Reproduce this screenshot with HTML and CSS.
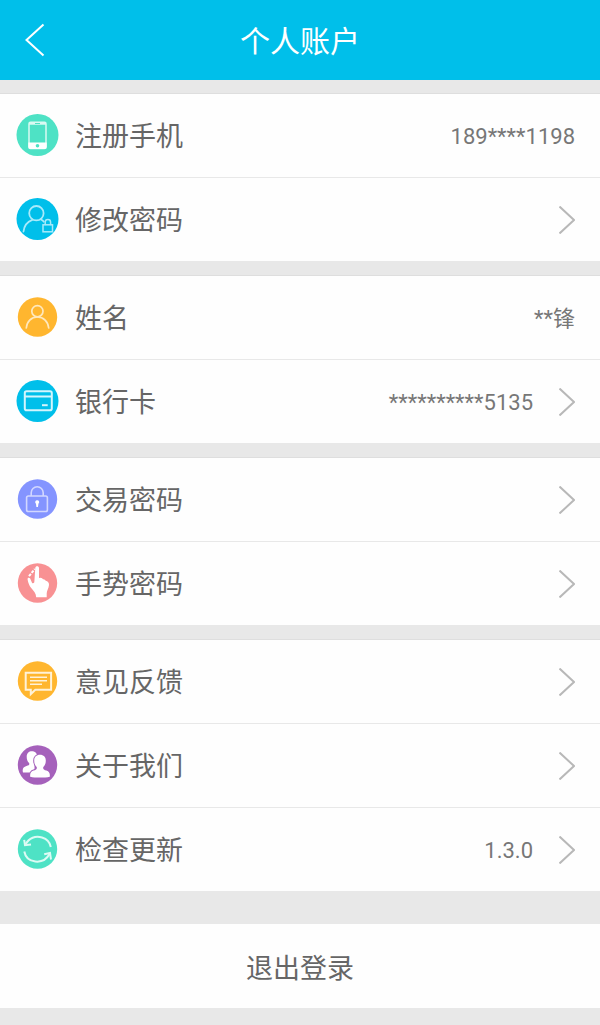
FILE: index.html
```html
<!DOCTYPE html>
<html lang="zh-CN">
<head>
    <meta charset="UTF-8">
    <meta name="viewport" content="width=device-width, initial-scale=1.0">
    <title>个人账户</title>
    <link rel="stylesheet" href="styles.css">
</head>
<body>
    <svg class="sprite" aria-hidden="true">
        <symbol id="arrow" viewBox="0 0 16 28">
            <path d="M0.500 0.500 15 14 0.500 27.500"/>
        </symbol>
    </svg>

    <header class="header">
        <a href="#" class="back" aria-label="返回">
            <svg width="20" height="34" viewBox="0 0 20 34"><path d="M18.500 1.500 1.500 17l17 15.500"/></svg>
        </a>
        <h1>个人账户</h1>
    </header>

    <main>
        <section class="group">
            <div class="row">
                <svg class="icon" viewBox="0 0 43 43">
                    <circle cx="21.500" cy="21" r="21" fill="#4ee2c5"/>
                    <rect x="13" y="8.200" width="17" height="26.300" rx="1.500" fill="none" stroke="#d9faf2" stroke-width="1.500"/>
                    <path d="M12.300 28.500h18.400V33a2 2 0 0 1-2 2H14.300a2 2 0 0 1-2-2z" fill="#fff"/>
                    <path d="M13 9.500h17" stroke="#d9faf2" stroke-width="2.500"/>
                    <path d="M19 9.500h5" stroke="#4ee2c5" stroke-width="1"/>
                    <circle cx="21.500" cy="31.700" r="1.800" fill="#4ee2c5"/>
                </svg>
                <span class="label">注册手机</span>
                <span class="value">189****1198</span>
            </div>
            <a href="#" class="row">
                <svg class="icon" viewBox="0 0 43 43">
                    <circle cx="21.500" cy="21" r="21" fill="#00bfea"/>
                    <g fill="none" stroke="#a8eafa" stroke-width="1.800" stroke-linecap="round">
                        <circle cx="20.400" cy="15.200" r="7.200"/>
                        <path d="M7.500 33.500c.6-5.500 3.800-9.800 8.800-11.700M25 21.500c1.200.6 2 1.300 2.800 2.200"/>
                        <rect x="27" y="26.800" width="9.500" height="7" stroke-width="1.500"/>
                        <path d="M29.200 26.500v-2.300a2.700 2.700 0 0 1 5.400 0v2.300" stroke-width="1.500"/>
                    </g>
                </svg>
                <span class="label">修改密码</span>
                <svg class="arrow"><use href="#arrow"/></svg>
            </a>
        </section>

        <section class="group">
            <div class="row">
                <svg class="icon" viewBox="0 0 43 43">
                    <circle cx="21.500" cy="21" r="19.700" fill="#ffb62f"/>
                    <g fill="none" stroke="#ffe8bd" stroke-width="1.700" stroke-linecap="round">
                        <circle cx="21.400" cy="15.200" r="5.600"/>
                        <path d="M10.300 32c.5-6.500 5-11 11.100-11s10.700 4.500 11.300 11"/>
                    </g>
                </svg>
                <span class="label">姓名</span>
                <span class="value">**锋</span>
            </div>
            <a href="#" class="row">
                <svg class="icon" viewBox="0 0 43 43">
                    <circle cx="21.500" cy="21" r="21" fill="#00bfea"/>
                    <g fill="none" stroke="#d2f5fd" stroke-width="2">
                        <rect x="8.800" y="11.200" width="27" height="19" rx="1.800"/>
                        <path d="M9 16.500h27"/>
                        <path d="M26 25.200h5.700"/>
                    </g>
                </svg>
                <span class="label">银行卡</span>
                <span class="value">**********5135</span>
                <svg class="arrow"><use href="#arrow"/></svg>
            </a>
        </section>

        <section class="group">
            <a href="#" class="row">
                <svg class="icon" viewBox="0 0 43 43">
                    <circle cx="21.500" cy="21" r="19.700" fill="#8494ff"/>
                    <g fill="none" stroke="#d2d7ff" stroke-width="1.600">
                        <rect x="10.600" y="18" width="20.800" height="15.500" rx="1.800"/>
                        <path d="M15.200 18v-3.200a6 6 0 0 1 12 0V18"/>
                    </g>
                    <path d="M21.200 22.200a2 2 0 0 1 1.200 3.600l-.4 3.200h-1.600l-.4-3.200a2 2 0 0 1 1.200-3.600z" fill="#fff"/>
                </svg>
                <span class="label">交易密码</span>
                <svg class="arrow"><use href="#arrow"/></svg>
            </a>
            <a href="#" class="row">
                <svg class="icon" viewBox="0 0 43 43">
                    <circle cx="21.500" cy="21" r="19.700" fill="#f89193"/>
                    <path d="M19.300 6c0-2.300 3.700-2.300 3.700 0v10l1.500-.3c1.300 0 2 .8 2.500 1.500 1.400-.2 2.300.6 2.700 1.500 2.200.2 3.500 2.100 3.300 4.300-.3 3.500-2.300 5.700-2.300 8.500v3.800H20.200c-.2-4-2.400-6.300-5-9.300-2-2.300-3-5.200-3.600-8.500-.4-2 1.700-2.400 2.600-.9l1.900 4.300c.8.700 1.800.1 2.200-.7z" fill="#fff"/>
                    <path d="M13 14.200 18.800 7" stroke="#fff" stroke-width="2" stroke-dasharray="3 1.200"/>
                </svg>
                <span class="label">手势密码</span>
                <svg class="arrow"><use href="#arrow"/></svg>
            </a>
        </section>

        <section class="group">
            <a href="#" class="row">
                <svg class="icon" viewBox="0 0 43 43">
                    <circle cx="21.500" cy="21" r="19.700" fill="#ffb62f"/>
                    <g fill="none" stroke="#fff2d8" stroke-width="2">
                        <path d="M9.700 12.700h25.400v17H19.300l-4.500 4.500v-4.500H9.700z"/>
                        <path d="M14 17.300h17M14 20.800h17M14 24.300h12" stroke-width="1.600"/>
                    </g>
                </svg>
                <span class="label">意见反馈</span>
                <svg class="arrow"><use href="#arrow"/></svg>
            </a>
            <a href="#" class="row">
                <svg class="icon" viewBox="0 0 43 43">
                    <circle cx="21.500" cy="21" r="19.700" fill="#a561bb"/>
                    <g fill="#fff">
                        <path d="M16 7.200c3.300 0 5.300 2.200 5.200 5.500 0 2.700-1.200 4.700-2.700 6.300v9.500H7c-1-3.500.3-5.600 3.500-6.500 2.500-.7 3.200-1 2.600-3-1.500-1.300-2.400-3.500-2.400-6.300 0-3.500 2-5.500 5.300-5.500z"/>
                        <path d="M24 10.800c3.700 0 5.900 2.400 5.800 5.900 0 2.700-.9 4.900-2.500 6.300-.5 2.200.6 2.800 3.100 3.500 3 .9 3.700 3.200 3.400 6.200-5 1.200-14.600 1.200-19.600 0-.3-3 .4-5.300 3.400-6.200 2.500-.7 3.600-1.300 3.100-3.500-1.600-1.400-2.500-3.600-2.500-6.300-.1-3.500 2.100-5.900 5.800-5.900z" stroke="#a561bb" stroke-width="2" paint-order="stroke"/>
                    </g>
                </svg>
                <span class="label">关于我们</span>
                <svg class="arrow"><use href="#arrow"/></svg>
            </a>
            <a href="#" class="row">
                <svg class="icon" viewBox="0 0 43 43">
                    <circle cx="21.500" cy="21" r="19.700" fill="#4ee2c5"/>
                    <g fill="none" stroke="#dcfbf4" stroke-width="2">
                        <path d="M9.500 16.500C13 9.800 19.500 7.500 26 9.500c4.800 1.500 8 5 8.800 9.500"/>
                        <path d="M8.200 11.800 9 17.200l6-.8"/>
                        <path d="M8.300 23.500c1 5.500 5.200 9.300 11 10 6 .7 11.500-2.300 14.400-7.700"/>
                        <path d="M28.200 26.300 34 25l1 6.500"/>
                    </g>
                </svg>
                <span class="label">检查更新</span>
                <span class="value">1.3.0</span>
                <svg class="arrow"><use href="#arrow"/></svg>
            </a>
        </section>

        <button type="button" class="logout">退出登录</button>
    </main>
</body>
</html>
```
FILE: styles.css
```css
* {
    box-sizing: border-box;
}

body {
    margin: 0;
    background: #e8e8e8;
    color: #666;
    font-family: Roboto, "Noto Sans CJK SC", sans-serif;
}

.sprite {
    display: none;
}

/* top bar */
.header {
    display: grid;
    grid-template-columns: 44px 1fr 44px;
    align-items: center;
    height: 80px;
    padding: 0 25px;
    background: #00bfea;
    color: #fff;
}

.header h1 {
    margin: 0;
    padding-top: 3px;
    font-size: 30px;
    font-weight: 400;
    line-height: 40px;
    text-align: center;
}

.back {
    display: flex;
}

.back svg {
    fill: none;
    stroke: #fff;
    stroke-width: 2;
}

/* list */
main {
    display: flex;
    flex-direction: column;
    gap: 14px;
    padding: 13px 0 16px;
}

.group {
    background: #fefefe;
}

.row {
    display: flex;
    align-items: center;
    height: 84px;
    padding: 0 25px 0 16px;
    border-top: 1px solid #e8e8e8;
    color: #666;
    text-decoration: none;
}

.row:first-child {
    border-top-color: #dedede;
}

.icon {
    width: 43px;
    height: 43px;
    margin-right: 16px;
}

.label {
    flex: 1;
    padding-top: 3px;
    font-size: 27px;
    line-height: 40px;
}

.value {
    padding-top: 2px;
    color: #777;
    font-size: 22px;
    line-height: 32px;
}

.arrow {
    width: 16px;
    height: 28px;
    margin-left: 26px;
    fill: none;
    stroke: #b8b8b8;
    stroke-width: 2;
}

.logout {
    height: 84px;
    margin-top: 19px;
    border: 0;
    background: #fefefe;
    color: #666;
    font-family: inherit;
    font-size: 27px;
    cursor: pointer;
}
```
